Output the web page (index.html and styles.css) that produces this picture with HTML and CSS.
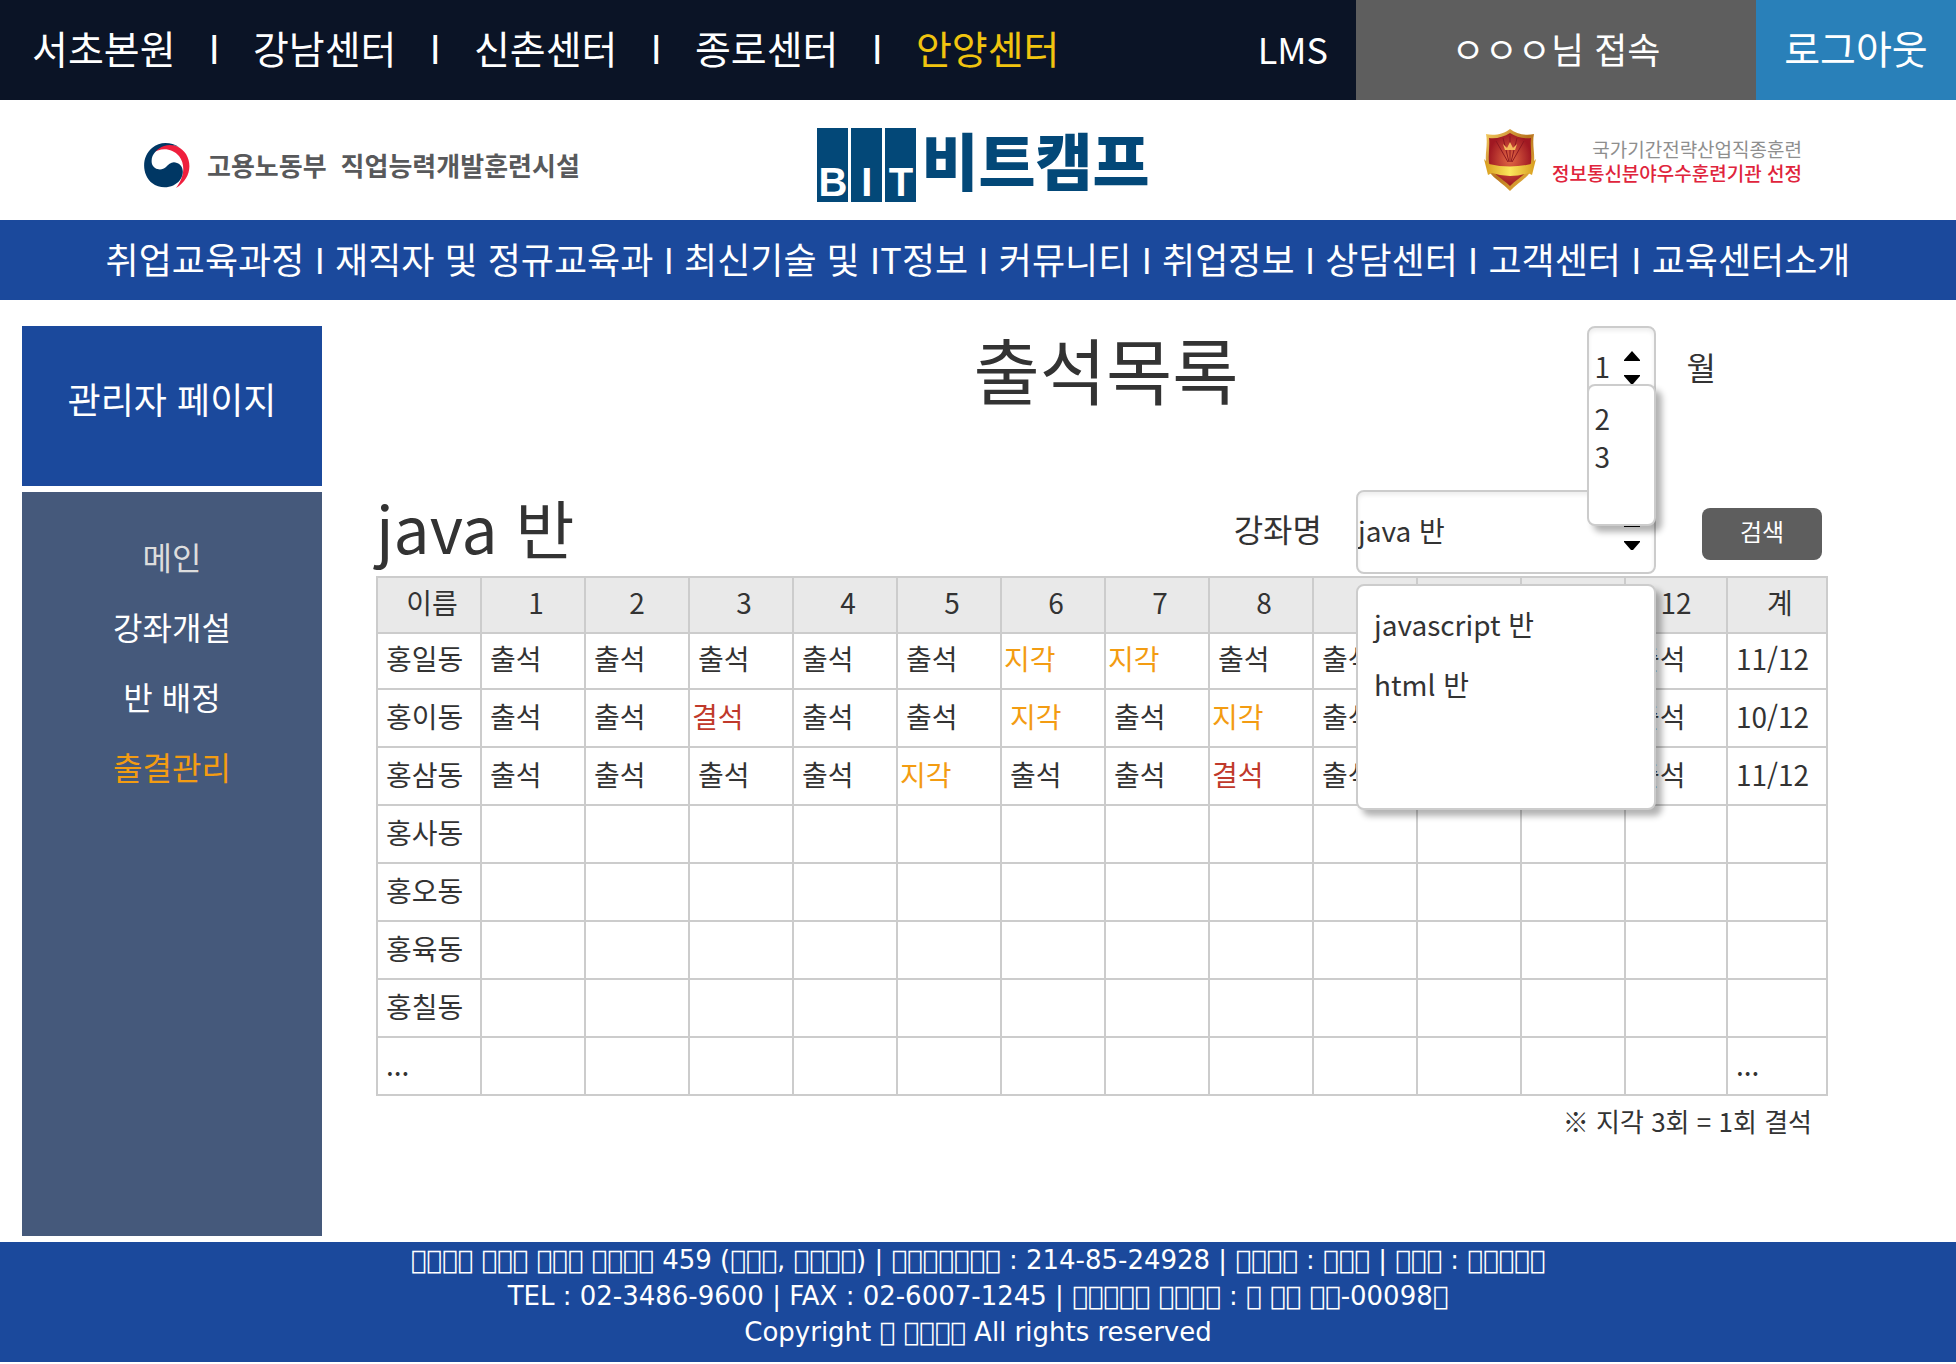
FILE: index.html
```html
<!DOCTYPE html>
<html lang="ko">
<head>
<meta charset="utf-8">
<title>출석목록</title>
<link rel="stylesheet" href="styles.css">
</head>
<body>
<header>
  <div class="topbar">
    <nav class="centers">
      <a href="#">서초본원</a><span>I</span><a href="#">강남센터</a><span>I</span><a href="#">신촌센터</a><span>I</span><a href="#">종로센터</a><span>I</span><a href="#" class="current">안양센터</a>
    </nav>
    <a href="#" class="lms">LMS</a>
    <div class="user">ㅇㅇㅇ님 접속</div>
    <button type="button" class="logout">로그아웃</button>
  </div>
  <div class="logos">
    <div class="ministry">
      <svg width="48" height="48" viewBox="0 0 48 48" aria-hidden="true">
        <path d="M10 6C20-1 36 1 43 12C50 24 46 38 33 46C41 36 43 23 36 14C29 6 17 5 9 12Z" fill="#ef1f3d"/>
        <path d="M36 5C28 0 17-1 9 6C-2 15-1 33 9 41C18 48 31 46 37 38C42 31 40 23 34 21C29 19 26 22 23 25C19 29 11 28 9 22C7 14 13 7 21 4C26 2 32 3 36 5Z" fill="#003764"/>
      </svg>
      <p><span>고용노동부</span><span>직업능력개발훈련시설</span></p>
    </div>
    <a href="#" class="bitcamp">
      <span class="bit"><b>B</b><b>I</b><b>T</b></span>
      <span class="camp">비트캠프</span>
    </a>
    <div class="award">
      <svg width="54" height="64" viewBox="0 0 54 64" aria-hidden="true">
        <defs>
          <linearGradient id="gold" x1="0" y1="0" x2="1" y2="1"><stop offset="0" stop-color="#f6cf62"/><stop offset=".5" stop-color="#b8731d"/><stop offset="1" stop-color="#f2c443"/></linearGradient>
          <radialGradient id="red"><stop offset="0" stop-color="#e36a45"/><stop offset="1" stop-color="#a01822"/></radialGradient>
          <linearGradient id="ribbon"><stop offset="0" stop-color="#d79a1c"/><stop offset=".5" stop-color="#fbe75c"/><stop offset="1" stop-color="#d79a1c"/></linearGradient>
        </defs>
        <path d="M27 1C21 6 11 8 3 6C5 16 2 25 3 34C4 48 18 53 27 63C36 53 50 48 51 34C52 25 49 16 51 6C43 8 33 6 27 1Z" fill="url(#gold)"/>
        <path d="M27 5C21 9 13 11 6 10C7 18 5 26 6 34C7 45 19 50 27 58C35 50 47 45 48 34C49 26 47 18 48 10C41 11 33 9 27 5Z" fill="url(#red)"/>
        <path d="M25 34L13 13M26 34L20 10M27 34V8M28 34L34 10M29 34L41 13" stroke="#8c1720" stroke-width="1"/>
        <path d="M20 16L24 20L27 14L30 20L34 16L32 22H22Z" fill="#f5b95c"/>
        <path d="M1 31L6 36Q27 41 48 36L53 31L49 47L45 45Q27 51 9 45L5 47Z" fill="url(#ribbon)"/>
      </svg>
      <p><span>국가기간전략산업직종훈련</span><strong>정보통신분야우수훈련기관 선정</strong></p>
    </div>
  </div>
  <nav class="mainnav">
    <a href="#">취업교육과정</a> I <a href="#">재직자 및 정규교육과</a> I <a href="#">최신기술 및 IT정보</a> I <a href="#">커뮤니티</a> I <a href="#">취업정보</a> I <a href="#">상담센터</a> I <a href="#">고객센터</a> I <a href="#">교육센터소개</a>
  </nav>
</header>

<div class="page">
  <aside class="sidebar">
    <h2>관리자 페이지</h2>
    <nav>
      <a href="#" class="dim">메인</a>
      <a href="#">강좌개설</a>
      <a href="#">반 배정</a>
      <a href="#" class="current">출결관리</a>
    </nav>
  </aside>

  <main>
    <div class="titlerow">
      <h1>출석목록</h1>
      <div class="month">
        <div class="picker">
          <select id="month"><option>1</option><option>2</option><option>3</option></select>
          <svg class="arrows" width="16" height="34" viewBox="0 0 16 34" aria-hidden="true"><path d="M8 0L16 9V10H0V9ZM0 24H16V25L9 33H7L0 25Z"/></svg>
          <ul class="menu"><li>2</li><li>3</li></ul>
        </div>
        <label for="month">월</label>
      </div>
    </div>

    <form class="search">
      <h2>java 반</h2>
      <label for="course">강좌명</label>
      <div class="picker">
        <select id="course"><option>java 반</option><option>javascript 반</option><option>html 반</option></select>
        <svg class="arrows" width="16" height="34" viewBox="0 0 16 34" aria-hidden="true"><path d="M8 0L16 9V10H0V9ZM0 24H16V25L9 33H7L0 25Z"/></svg>
        <ul class="menu"><li>javascript 반</li><li>html 반</li></ul>
      </div>
      <button type="button">검색</button>
    </form>

    <table>
      <colgroup><col span="12"><col class="c12"><col class="total"></colgroup>
      <thead>
        <tr><th>이름</th><th>1</th><th class="mid">2</th><th>3</th><th>4</th><th>5</th><th>6</th><th>7</th><th>8</th><th>9</th><th>10</th><th>11</th><th class="mid">12</th><th>계</th></tr>
      </thead>
      <tbody>
        <tr class="first"><td>홍일동</td><td>출석</td><td>출석</td><td>출석</td><td>출석</td><td>출석</td><td class="late tight">지각</td><td class="late tight">지각</td><td>출석</td><td>출석</td><td>출석</td><td>출석</td><td>출석</td><td>11/12</td></tr>
        <tr><td>홍이동</td><td>출석</td><td>출석</td><td class="absent tight">결석</td><td>출석</td><td>출석</td><td class="late">지각</td><td>출석</td><td class="late tight">지각</td><td>출석</td><td>출석</td><td>출석</td><td>출석</td><td>10/12</td></tr>
        <tr><td>홍삼동</td><td>출석</td><td>출석</td><td>출석</td><td>출석</td><td class="late tight">지각</td><td>출석</td><td>출석</td><td class="absent tight">결석</td><td>출석</td><td>출석</td><td>출석</td><td>출석</td><td>11/12</td></tr>
        <tr><td>홍사동</td><td></td><td></td><td></td><td></td><td></td><td></td><td></td><td></td><td></td><td></td><td></td><td></td><td></td></tr>
        <tr><td>홍오동</td><td></td><td></td><td></td><td></td><td></td><td></td><td></td><td></td><td></td><td></td><td></td><td></td><td></td></tr>
        <tr><td>홍육동</td><td></td><td></td><td></td><td></td><td></td><td></td><td></td><td></td><td></td><td></td><td></td><td></td><td></td></tr>
        <tr><td>홍칠동</td><td></td><td></td><td></td><td></td><td></td><td></td><td></td><td></td><td></td><td></td><td></td><td></td><td></td></tr>
        <tr><td>...</td><td></td><td></td><td></td><td></td><td></td><td></td><td></td><td></td><td></td><td></td><td></td><td></td><td>...</td></tr>
      </tbody>
    </table>
    <p class="note">※ 지각 3회 = 1회 결석</p>
  </main>
</div>

<footer>
  <p>&#xF0000;&#xF0000;&#xF0000;&#xF0000; &#xF0000;&#xF0000;&#xF0000; &#xF0000;&#xF0000;&#xF0000; &#xF0000;&#xF0000;&#xF0000;&#xF0000; 459 (&#xF0000;&#xF0000;&#xF0000;, &#xF0000;&#xF0000;&#xF0000;&#xF0000;) | &#xF0000;&#xF0000;&#xF0000;&#xF0000;&#xF0000;&#xF0000;&#xF0000; : 214-85-24928 | &#xF0000;&#xF0000;&#xF0000;&#xF0000; : &#xF0000;&#xF0000;&#xF0000; | &#xF0000;&#xF0000;&#xF0000; : &#xF0000;&#xF0000;&#xF0000;&#xF0000;&#xF0000;</p>
  <p>TEL : 02-3486-9600 | FAX : 02-6007-1245 | &#xF0000;&#xF0000;&#xF0000;&#xF0000;&#xF0000; &#xF0000;&#xF0000;&#xF0000;&#xF0000; : &#xF0000; &#xF0000;&#xF0000; &#xF0000;&#xF0000;-00098&#xF0000;</p>
  <p>Copyright &#xF0000; &#xF0000;&#xF0000;&#xF0000;&#xF0000; All rights reserved</p>
</footer>
</body>
</html>
```
FILE: styles.css
```css
* { box-sizing: border-box; }

body {
  margin: 0;
  background: #fff;
  color: #333;
  font-family: "Noto Sans CJK KR", sans-serif;
  font-size: 28px;
  line-height: 40px;
}

h1, h2, p, ul { margin: 0; padding: 0; font-weight: 400; }
ul { list-style: none; }
a { color: inherit; text-decoration: none; }
button, select { font: inherit; color: inherit; border: 0; margin: 0; }

/* Top bar */
.topbar {
  display: flex;
  align-items: stretch;
  min-height: 100px;
  background: #0b1426;
  color: #fff;
  white-space: nowrap;
}
.centers {
  display: flex;
  align-items: center;
  gap: 33px;
  padding-left: 32px;
  padding-bottom: 6px;
  font-size: 39px;
}
.centers .current { color: #f1c40f; }
.lms {
  display: flex;
  align-items: center;
  margin-left: auto;
  padding: 0 28px 4px 0;
  font-size: 36px;
}
.user {
  display: flex;
  align-items: center;
  justify-content: center;
  width: 400px;
  padding-bottom: 4px;
  background: #5e5e5e;
  font-size: 36px;
}
.logout {
  width: 200px;
  padding: 0 0 6px;
  background: #2980b9;
  font-size: 39px;
}

/* Logos */
.logos {
  display: grid;
  grid-template-columns: 1fr auto 1fr;
  align-items: center;
  min-height: 120px;
  padding: 0 132px 0 143px;
}
.ministry {
  display: flex;
  align-items: center;
  gap: 16px;
  padding-top: 12px;
  color: #58595b;
}
.ministry p {
  display: flex;
  gap: 14px;
  padding-bottom: 2px;
  font-size: 26px;
  font-weight: 700;
}
.bitcamp {
  display: flex;
  align-items: flex-start;
  gap: 5px;
  padding-top: 10px;
  color: #034878;
}
.bit { display: flex; gap: 3px; }
.bit b {
  display: flex;
  align-items: flex-end;
  justify-content: center;
  width: 31px;
  height: 74px;
  background: #034878;
  color: #fff;
  font-family: "Liberation Sans", sans-serif;
  font-size: 40px;
}
.camp { font-size: 62px; font-weight: 900; line-height: 62px; }
.award {
  display: flex;
  align-items: center;
  justify-self: end;
  gap: 15px;
  margin-right: 22px;
}
.award p { padding-top: 2px; font-size: 19px; line-height: 24px; text-align: right; }
.award span, .award strong { display: block; }
.award span { color: #8e8e8e; }
.award strong { color: #e0243c; font-weight: 500; }

.mainnav {
  padding: 18px 0 22px;
  background: #1b499c;
  color: #fff;
  font-size: 36px;
  text-align: center;
  white-space: nowrap;
}

/* Page */
.page { display: flex; padding: 26px 128px 6px 22px; }
.sidebar {
  display: flex;
  flex-direction: column;
  flex: 0 0 300px;
  gap: 6px;
  color: #fff;
  text-align: center;
}
.sidebar h2 {
  padding: 52px 0 68px;
  background: #1b499c;
  font-size: 36px;
}
.sidebar nav {
  display: flex;
  flex-direction: column;
  gap: 30px;
  min-height: 744px;
  padding-top: 44px;
  background: #45597b;
  font-size: 32px;
}
.sidebar .dim { color: #ddd; }
.sidebar .current { color: #f39c12; }

main { flex: 1; min-width: 0; padding-left: 54px; }

.titlerow {
  display: grid;
  grid-template-columns: 1fr auto 1fr;
  align-items: center;
  margin-bottom: 80px;
  padding-left: 8px;
}
.titlerow h1 { grid-column: 2; font-size: 72px; line-height: 84px; }
.month {
  display: flex;
  align-items: center;
  justify-self: end;
  gap: 31px;
  margin-right: 112px;
}
.month label, .search label { padding-bottom: 4px; font-size: 32px; }

.picker {
  position: relative;
  display: grid;
  align-items: center;
}
.picker select {
  grid-area: 1 / 1;
  width: 100%;
  height: 84px;
  border: 2px solid #ccc;
  border-radius: 8px;
  background: #fff;
  box-shadow: inset 0 3px 4px #eee;
  appearance: none;
}
.arrows {
  grid-area: 1 / 1;
  justify-self: end;
  margin-right: 16px;
  pointer-events: none;
}
.menu {
  position: absolute;
  left: 0;
  width: 100%;
  border: 2px solid #ccc;
  border-radius: 8px;
  background: #fff;
  box-shadow: 6px 6px 6px rgba(0, 0, 0, .3);
}
.month .picker { width: 69px; }
.month select { padding: 0 6px 4px; }
.month .menu {
  top: 58px;
  z-index: 2;
  height: 142px;
  padding: 13px 6px;
  line-height: 38px;
}
.search .picker { width: 300px; }
.search select { padding: 0 0 4px; }
.search .arrows { margin-top: 4px; }
.search .menu {
  top: 94px;
  z-index: 1;
  height: 226px;
  padding: 8px 16px;
  line-height: 60px;
}

.search {
  display: flex;
  align-items: center;
  margin-bottom: 2px;
  padding-right: 6px;
}
.search h2 {
  margin-right: auto;
  padding-bottom: 12px;
  font-size: 64px;
  line-height: 72px;
}
.search label { margin-right: 34px; padding-bottom: 8px; }
.search button {
  width: 120px;
  height: 52px;
  margin: 4px 0 0 46px;
  padding: 0 0 6px;
  border-radius: 8px;
  background: #5e5e5e;
  color: #fff;
  font-size: 24px;
}

/* Attendance table */
table {
  width: 100%;
  border-collapse: collapse;
  table-layout: fixed;
}
.c12 { width: 102px; }
.total { width: 100px; }
th, td {
  height: 58px;
  padding: 0 0 4px 8px;
  border: 2px solid #ccc;
  font-weight: 400;
  text-align: left;
}
th {
  height: 56px;
  padding: 0 0 6px 6px;
  background: #e9e9e9;
  text-align: center;
}
th.mid { padding-left: 0; }
.first td { height: 56px; padding-bottom: 6px; }
td.tight { padding-left: 2px; }
.late { color: #f39c12; }
.absent { color: #c0392b; }
.note {
  padding: 5px 16px 0 0;
  font-size: 26px;
  text-align: right;
}

footer {
  min-height: 120px;
  background: #1b499c;
  color: #fff;
  font-family: "DejaVu Sans", sans-serif;
  font-size: 26px;
  line-height: 36px;
  text-align: center;
}
```
